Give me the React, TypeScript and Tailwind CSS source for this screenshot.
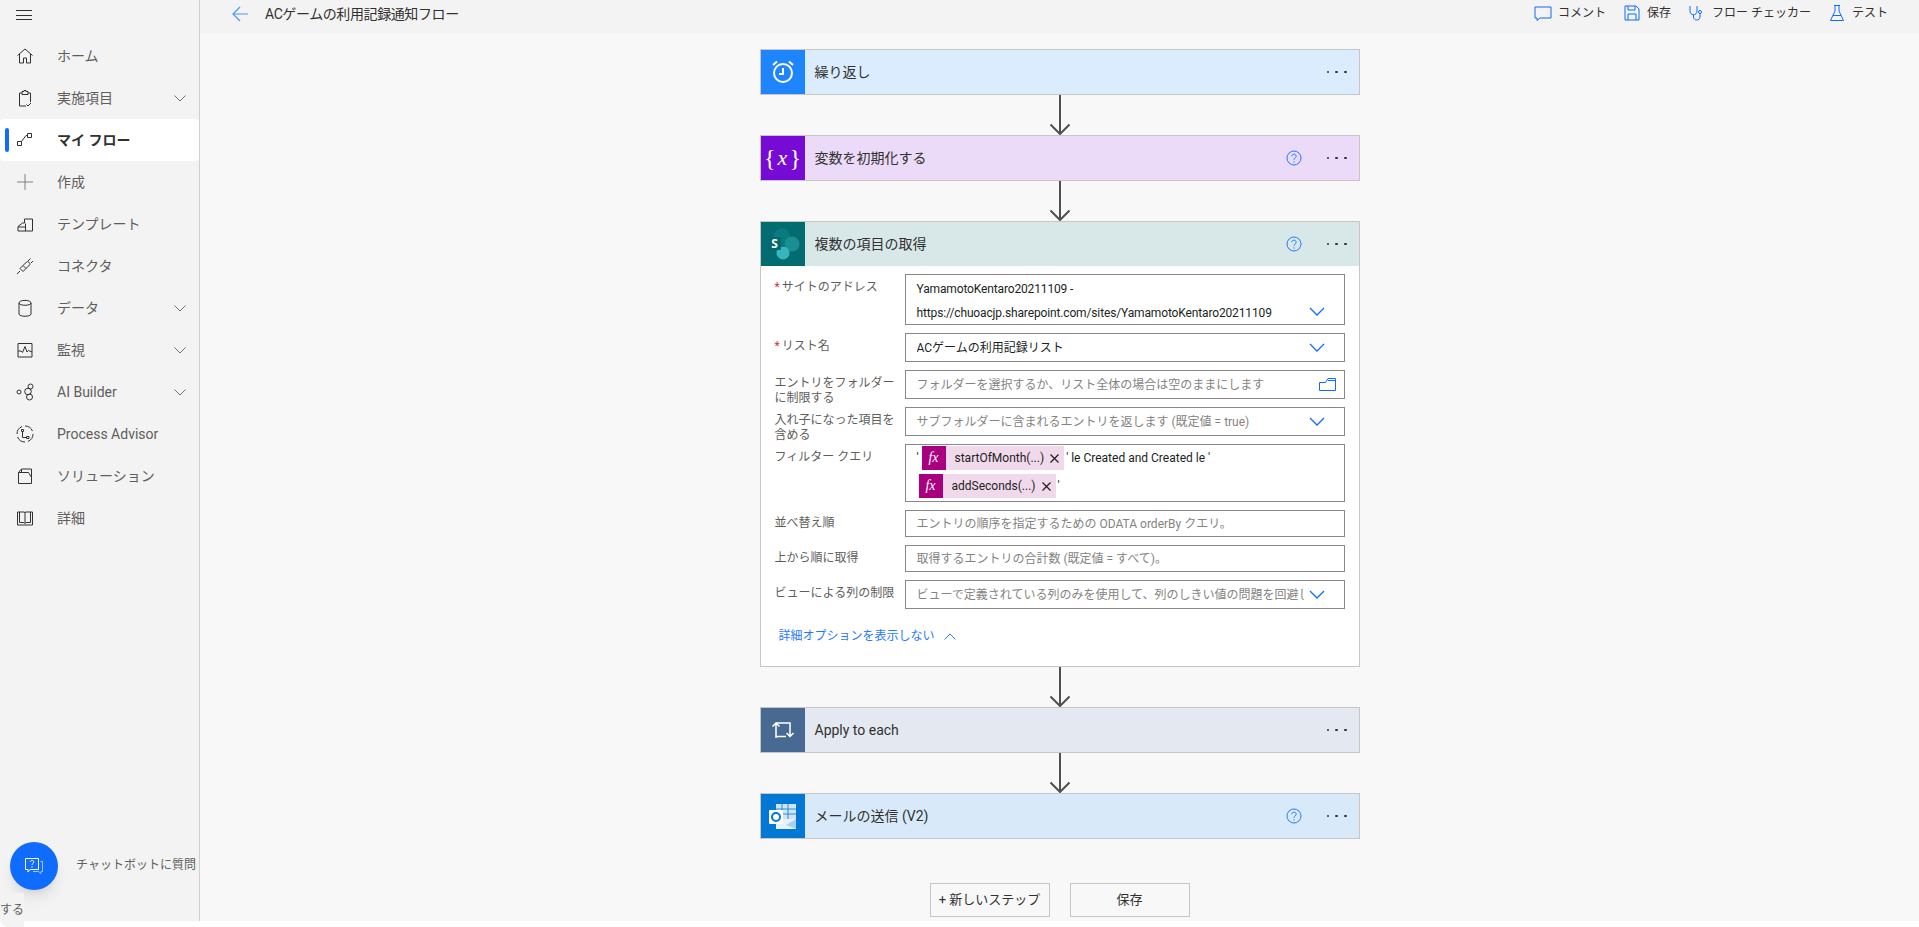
import type { ReactNode } from "react";

const ic = "fill-none stroke-[#323130] stroke-1";

const navIcons: Record<string, ReactNode> = {
  home: <path d="M1.500 8.500 9 2l7.500 6.500M3.500 7v9h4v-5h3v5h4V7" />,
  clip: <path d="M6 4H3.500V17H10M6 4V5.500H12V4M6 4V2.500H8V1.500H10V2.500H12V4M12 4H14.500V13M10.500 15.500l1.500 1.500 3-3" />,
  flow: <path d="M1.500 10.500H5.500V14.500H1.500ZM11.500 2.500H15.500V6.500H11.500ZM5.500 10.500 10 4.500H11.500" />,
  template: <path d="M2 16V11.500L6.500 8H8.500V4H16.500V16ZM2 12H9.500V8.500M9.500 16V12" />,
  plug: <path d="M1 17 4 14M7 8.500 10.500 5C12 3.500 15 6.500 13.500 8L10 11.500ZM12 4 14.500 1.500M15 6 17 4M7 8.500 4 11.500 7 14.500 10 11.500" />,
  data: <path d="M3 4c0-3.500 12-3.500 12 0v11c0 3-12 3-12 0ZM3 4c0 3 12 3 12 0" />,
  monitor: <path d="M2 2.500H16V16H2ZM2 10H5L6.500 11.500 9 5.500 11 11 12.500 9.500 16 11" />,
  ai: (
    <>
      <circle cx="3" cy="9" r="2" />
      <circle cx="14.500" cy="3.500" r="2.500" />
      <circle cx="12" cy="8.500" r="3.300" />
      <circle cx="13.500" cy="14" r="3" />
    </>
  ),
  advisor: (
    <>
      <circle cx="9" cy="9" r="8" strokeDasharray="9.500 3" />
      <path d="M6.500 6.500V12.500H10.500M5.500 4.500H7.500V6.500H5.500ZM10.500 11.500H13V13.500H10.500Z" />
    </>
  ),
  solution: <path d="M2.500 16.500V5.500H12.500L15.500 10.500V16.500ZM5.500 5.500V2H15.500V10.500M2.500 5.500 5.500 2" />,
  book: <path d="M1.500 3H8.500L9 4 9.500 3H16.500V16H1.500ZM3.500 3V13.500H8L9 14.500 10 13.500H14.500V3M9 4V14.500" />,
};

function NavItem({ label, icon, chevron, active, plus }: { label: string; icon?: string; chevron?: boolean; active?: boolean; plus?: boolean }) {
  return (
    <div className={`relative flex h-[42px] items-center ${active ? "rounded-sm bg-white" : ""}`}>
      {active && <div className="absolute left-[5px] top-[9px] h-[24px] w-[4px] rounded-sm bg-[#0f6cff]" />}
      <div className="flex w-[50px] justify-center">
        {plus ? (
          <svg width="18" height="18" viewBox="0 0 18 18" className="fill-none stroke-[#808080] stroke-1">
            <path d="M9 1V17M1 9H17" />
          </svg>
        ) : (
          <svg width="18" height="18" viewBox="0 0 18 18" className={ic}>
            {icon && navIcons[icon]}
          </svg>
        )}
      </div>
      <span className={`ml-[7px] flex-1 text-sm ${active ? "font-bold text-[#323130]" : "text-[#605e5c]"}`}>{label}</span>
      {chevron && (
        <svg width="12" height="7" viewBox="0 0 12 7" className="mr-[13px] fill-none stroke-[#707070] stroke-1">
          <path d="M0.500 0.500 6 6l5.500-5.500" />
        </svg>
      )}
    </div>
  );
}

function Sidebar() {
  return (
    <aside className="flex w-[200px] shrink-0 flex-col border-r border-[#d0d0d0] bg-[#f3f3f3]">
      <div className="h-[35px] pl-[16px] pt-[10px]">
        <div className="flex w-[16px] flex-col gap-[3.500px]">
          <div className="h-px bg-[#323130]" />
          <div className="h-px bg-[#323130]" />
          <div className="h-px bg-[#323130]" />
        </div>
      </div>
      <NavItem label="ホーム" icon="home" />
      <NavItem label="実施項目" icon="clip" chevron />
      <NavItem label="マイ フロー" icon="flow" active />
      <NavItem label="作成" plus />
      <NavItem label="テンプレート" icon="template" />
      <NavItem label="コネクタ" icon="plug" />
      <NavItem label="データ" icon="data" chevron />
      <NavItem label="監視" icon="monitor" chevron />
      <NavItem label="AI Builder" icon="ai" chevron />
      <NavItem label="Process Advisor" icon="advisor" />
      <NavItem label="ソリューション" icon="solution" />
      <NavItem label="詳細" icon="book" />
    </aside>
  );
}

function HeaderAction({ label, children }: { label: string; children: ReactNode }) {
  return (
    <div className="flex items-center gap-[6px]">
      <svg width="18" height="18" viewBox="0 0 18 18" className="fill-none stroke-[#0f6cff] stroke-1">
        {children}
      </svg>
      <span className="text-xs text-[#323130]">{label}</span>
    </div>
  );
}

function TopBar() {
  return (
    <header className="flex h-[33px] shrink-0 items-start justify-between bg-[#f3f3f3] pl-[32px] pr-[31px] pt-[4px]">
      <div className="flex items-center gap-[17px]">
        <svg width="16" height="18" viewBox="0 0 16 18" className="fill-none stroke-[#4f94ff] stroke-[1.200]">
          <path d="M16 9H1M8 2 1 9l7 7" />
        </svg>
        <span className="text-sm tracking-[-0.4px] text-[#323130]">ACゲームの利用記録通知フロー</span>
      </div>
      <div className="flex items-center gap-[17px]">
        <HeaderAction label="コメント">
          <path d="M1 3H17V14H6L3 16.500V14H1Z" />
        </HeaderAction>
        <HeaderAction label="保存">
          <path d="M2 2H13L16 5V16H2ZM5 2V6H12V2M5 16V10H13V16" />
        </HeaderAction>
        <HeaderAction label="フロー チェッカー">
          <path d="M2 2V7C2 12 9 12 9 7V2M5.500 10.500V13C5.500 17 12 17 12 13V9.500" />
          <circle cx="12" cy="8" r="1.500" />
        </HeaderAction>
        <HeaderAction label="テスト">
          <path d="M6 1.500H12M7 1.500V7L2.500 16.500H15.500L11 7V1.500M5 11.500H13" />
        </HeaderAction>
      </div>
    </header>
  );
}

function Arrow() {
  return (
    <svg width="24" height="40" viewBox="0 0 24 40" className="shrink-0 fill-none stroke-[#505050] stroke-2">
      <path d="M12 0V39M2.500 29.500 12 39l9.500-9.500" />
    </svg>
  );
}

function HelpIcon() {
  return (
    <svg width="16" height="16" viewBox="0 0 16 16" className="mr-[25px] fill-none stroke-[#1f7aff]">
      <circle cx="8" cy="8" r="7" />
      <path d="M5.800 6.200C5.800 3.500 10.200 3.500 10.200 6.200 10.200 7.800 8 7.800 8 9.800" />
      <path d="M8 11.300V12.500" />
    </svg>
  );
}

function Dots() {
  return (
    <div className="mr-[12px] flex w-[20px] justify-between">
      <div className="h-[2.500px] w-[2.500px] rounded-full bg-[#323130]" />
      <div className="h-[2.500px] w-[2.500px] rounded-full bg-[#323130]" />
      <div className="h-[2.500px] w-[2.500px] rounded-full bg-[#323130]" />
    </div>
  );
}

function CardHeader({ title, help, headerClass, iconClass, children }: { title: string; help?: boolean; headerClass: string; iconClass: string; children: ReactNode }) {
  return (
    <div className={`flex h-[44px] items-center ${headerClass}`}>
      <div className={`flex h-[44px] w-[44px] items-center justify-center ${iconClass}`}>{children}</div>
      <span className="ml-[10px] flex-1 text-sm text-[#323130]">{title}</span>
      {help && <HelpIcon />}
      <Dots />
    </div>
  );
}

function Chevron() {
  return (
    <svg width="16" height="10" viewBox="0 0 16 10" className="shrink-0 fill-none stroke-[#0f6cff] stroke-[1.300]">
      <path d="M1 1l7 7 7-7" />
    </svg>
  );
}

function Field({ label, required, h, children }: { label: string; required?: boolean; h: string; children: ReactNode }) {
  return (
    <div className={`flex ${h}`}>
      <div className="w-[130px] shrink-0 pt-[6px] text-xs leading-[15px] text-[#605e5c]">
        {required && <span className="mr-[2px] text-[#d13438]">*</span>}
        {label}
      </div>
      <div className="flex min-w-0 flex-1 border border-[#8a8886] bg-white text-xs">{children}</div>
    </div>
  );
}

function InlineField({ text, placeholder, chevron }: { text: string; placeholder?: boolean; chevron?: boolean }) {
  return (
    <div className="flex min-w-0 flex-1 items-center justify-between gap-[5px] pl-[11px] pr-[19px]">
      <span className={`overflow-hidden whitespace-nowrap ${placeholder ? "text-[#858381]" : "text-[#201f1e]"}`}>{text}</span>
      {chevron && <Chevron />}
    </div>
  );
}

function Token({ label }: { label: string }) {
  return (
    <div className="flex h-[24px] items-center bg-[#f1d9ec]">
      <div className="flex h-[24px] w-[24px] items-center justify-center bg-[#a9007f] font-['Liberation_Serif',serif] text-sm italic text-white">
        fx
      </div>
      <span className="ml-[9px] text-xs text-[#201f1e]">{label}</span>
      <svg width="9" height="9" viewBox="0 0 9 9" className="ml-[6px] mr-[5px] fill-none stroke-[#201f1e] stroke-[1.200]">
        <path d="M0.500 0.500 8.500 8.500M8.500 0.500 0.500 8.500" />
      </svg>
    </div>
  );
}

function GetItemsBody() {
  return (
    <div className="flex flex-col gap-[8px] px-[14px] pt-[8px]">
      <Field label="サイトのアドレス" required h="h-[51px]">
        <div className="relative flex-1 pl-[11px] pt-[2px] leading-[24px] tracking-[-0.14px] text-[#201f1e]">
          <div>YamamotoKentaro20211109 -</div>
          <div>https://chuoacjp.sharepoint.com/sites/YamamotoKentaro20211109</div>
          <div className="absolute bottom-[7px] right-[19px]">
            <Chevron />
          </div>
        </div>
      </Field>
      <Field label="リスト名" required h="h-[29px]">
        <InlineField text="ACゲームの利用記録リスト" chevron />
      </Field>
      <Field label="エントリをフォルダーに制限する" h="h-[29px]">
        <div className="flex flex-1 items-center justify-between pl-[11px] pr-[8px]">
          <span className="text-[#858381]">フォルダーを選択するか、リスト全体の場合は空のままにします</span>
          <svg width="17" height="13" viewBox="0 0 17 13" className="fill-none stroke-[#0f6cff]">
            <path d="M0.500 4.500V12.500H16.500V0.500H9L6.500 4.500ZM9 2.500H16.500" />
          </svg>
        </div>
      </Field>
      <Field label="入れ子になった項目を含める" h="h-[29px]">
        <InlineField text="サブフォルダーに含まれるエントリを返します (既定値 = true)" placeholder chevron />
      </Field>
      <Field label="フィルター クエリ" h="h-[58px]">
        <div className="flex flex-1 flex-col gap-[4px] pl-[11px] pt-[1px] text-[#201f1e]">
          <div className="flex items-center">
            <span className="w-[5px]">'</span>
            <Token label="startOfMonth(...)" />
            <span className="ml-[2px] whitespace-pre">' le Created and Created le '</span>
          </div>
          <div className="ml-[2px] flex items-center">
            <Token label="addSeconds(...)" />
            <span className="ml-[2px]">'</span>
          </div>
        </div>
      </Field>
      <Field label="並べ替え順" h="h-[27px]">
        <InlineField text="エントリの順序を指定するための ODATA orderBy クエリ。" placeholder />
      </Field>
      <Field label="上から順に取得" h="h-[27px]">
        <InlineField text="取得するエントリの合計数 (既定値 = すべて)。" placeholder />
      </Field>
      <Field label="ビューによる列の制限" h="h-[29px]">
        <InlineField text="ビューで定義されている列のみを使用して、列のしきい値の問題を回避します。" placeholder chevron />
      </Field>
      <div className="mt-[11px] flex h-[16px] items-center gap-[9px] pl-[4px] text-xs text-[#1f7aff]">
        <span>詳細オプションを表示しない</span>
        <svg width="12" height="7" viewBox="0 0 12 7" className="fill-none stroke-[#1f7aff] stroke-1">
          <path d="M0.500 6.500 6 1l5.500 5.500" />
        </svg>
      </div>
      <div className="h-[14px]" />
    </div>
  );
}

function FlowCanvas() {
  return (
    <main className="flex flex-1 flex-col items-center overflow-hidden bg-[#f8f8f8] pt-[16px]">
      <div className="w-[600px] border border-[#c8c6c4]">
        <CardHeader title="繰り返し" headerClass="bg-[#dcecff]" iconClass="bg-[#1f85ff]">
          <svg width="24" height="26" viewBox="0 0 24 26" className="fill-none stroke-white stroke-2">
            <circle cx="12" cy="14" r="9" />
            <path d="M12 9V15H8M2 6 6 2.500M22 6 18 2.500" />
          </svg>
        </CardHeader>
      </div>
      <Arrow />
      <div className="w-[600px] border border-[#c8c6c4]">
        <CardHeader title="変数を初期化する" help headerClass="bg-[#ebdaf8]" iconClass="bg-[#770bd6]">
          <span className="flex items-center gap-[2px] whitespace-nowrap font-['Liberation_Serif',serif] text-[24px] font-light leading-none text-white">
            <span>{"{"}</span>
            <span className="text-[22px] italic">x</span>
            <span>{"}"}</span>
          </span>
        </CardHeader>
      </div>
      <Arrow />
      <div className="w-[600px] border border-[#c8c6c4] bg-white">
        <CardHeader title="複数の項目の取得" help headerClass="bg-[#d8e8e8]" iconClass="bg-[#036c70]">
          <svg width="44" height="44" viewBox="0 0 44 44">
            <circle cx="21" cy="15" r="8.500" fill="#0b7a7e" />
            <circle cx="31" cy="22" r="7.500" fill="#1a8f93" />
            <circle cx="22" cy="31" r="6.500" fill="#37b5bd" />
            <rect x="7" y="15" width="13" height="13" rx="1.500" fill="#04686c" />
            <text x="13.500" y="25.500" textAnchor="middle" fontSize="12" fontWeight="700" fill="#fff" fontFamily="Open Sans, sans-serif">S</text>
          </svg>
        </CardHeader>
        <GetItemsBody />
      </div>
      <Arrow />
      <div className="w-[600px] border border-[#c8c6c4]">
        <CardHeader title="Apply to each" headerClass="bg-[#e4e8f0]" iconClass="bg-[#486991]">
          <svg width="24" height="20" viewBox="0 0 24 20" className="fill-none stroke-white stroke-[1.500]">
            <path d="M5 18V3H19V16M1.500 6.500 5 3l3.500 3.500M15.500 13 19 16.500 22.500 13M5 16.500H15" />
          </svg>
        </CardHeader>
      </div>
      <Arrow />
      <div className="w-[600px] border border-[#c8c6c4]">
        <CardHeader title="メールの送信 (V2)" help headerClass="bg-[#d8eaf9]" iconClass="bg-[#0078d4]">
          <svg width="30" height="30" viewBox="0 0 30 30">
            <rect x="8" y="3" width="20" height="18" fill="#cfe4f6" />
            <path d="M14 3V21M20 3V21M8 8H28M8 13H28" stroke="#0078d4" strokeWidth="0.800" />
            <path d="M8 18H28V28H8Z" fill="#e8f2fb" />
            <path d="M28 18 18 24 28 28Z" fill="#a9cfee" />
            <rect x="1" y="9" width="14" height="14" rx="1" fill="#fff" />
            <circle cx="8" cy="16" r="4" fill="none" stroke="#0078d4" strokeWidth="2" />
          </svg>
        </CardHeader>
      </div>
      <div className="mt-[44px] flex shrink-0 gap-[20px]">
        <div className="flex h-[34px] w-[120px] items-center justify-center border border-[#c8c6c4] text-[13px] text-[#323130]">+ 新しいステップ</div>
        <div className="flex h-[34px] w-[120px] items-center justify-center border border-[#c8c6c4] text-[13px] text-[#323130]">保存</div>
      </div>
    </main>
  );
}

function ChatWidget() {
  return (
    <>
      <div className="absolute bottom-[37px] left-[10px] flex h-[48px] w-[48px] items-center justify-center rounded-full bg-[#0f6cff] shadow-lg">
        <svg width="20" height="19" viewBox="0 0 20 19" className="fill-none stroke-white">
          <path d="M1.500 1.500H14.500V12.500H6L4 15V12.500H1.500Z" />
          <path d="M16.500 4.500H18.500V14.500H17V16.500L14.500 14.500H9" strokeOpacity="0.600" />
          <path d="M6.300 5C6.300 2.800 9.700 2.800 9.700 5 9.700 6.300 8 6.300 8 8M8 9.200V10.500" />
        </svg>
      </div>
      <span className="absolute bottom-[54px] left-[76px] text-xs text-[#605e5c]">チャットボットに質問</span>
      <div className="absolute bottom-0 left-0 flex h-[34px] w-[24px] items-center rounded-bl-lg bg-[#f3f3f3] text-xs text-[#605e5c]">する</div>
    </>
  );
}

export default function App() {
  return (
    <div className="relative h-[927px] w-full overflow-hidden bg-white font-['Roboto','Noto_Sans_CJK_JP',sans-serif]">
      <div className="flex h-[921px]">
        <Sidebar />
        <div className="flex min-w-0 flex-1 flex-col">
          <TopBar />
          <FlowCanvas />
        </div>
      </div>
      <ChatWidget />
    </div>
  );
}
